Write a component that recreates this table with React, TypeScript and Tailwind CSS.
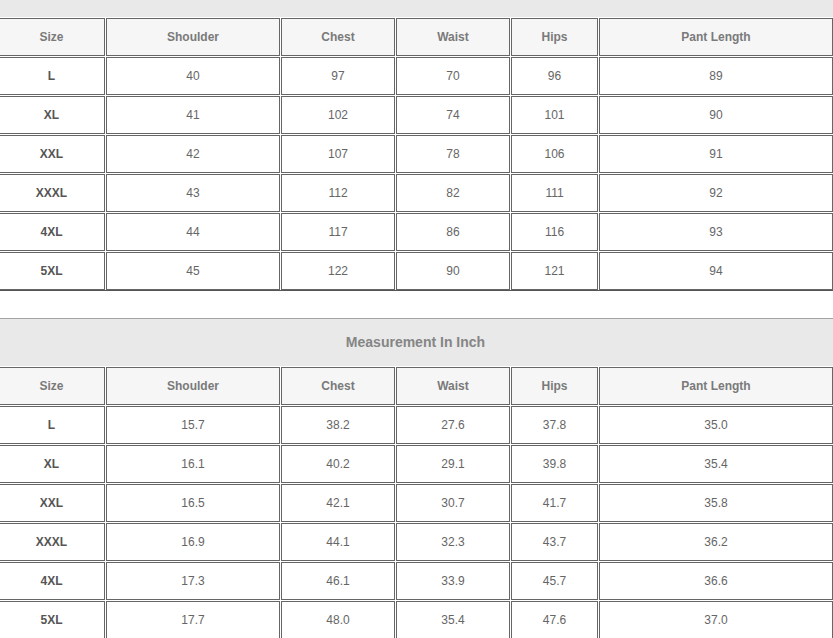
const widths = ['w-[107px]', 'w-[174px]', 'w-[114px]', 'w-[114px]', 'w-[87px]', 'w-[234px]'];

const headers = ['Size', 'Shoulder', 'Chest', 'Waist', 'Hips', 'Pant Length'];

const cmRows = [
  ['L', '40', '97', '70', '96', '89'],
  ['XL', '41', '102', '74', '101', '90'],
  ['XXL', '42', '107', '78', '106', '91'],
  ['XXXL', '43', '112', '82', '111', '92'],
  ['4XL', '44', '117', '86', '116', '93'],
  ['5XL', '45', '122', '90', '121', '94'],
];

const inchRows = [
  ['L', '15.7', '38.2', '27.6', '37.8', '35.0'],
  ['XL', '16.1', '40.2', '29.1', '39.8', '35.4'],
  ['XXL', '16.5', '42.1', '30.7', '41.7', '35.8'],
  ['XXXL', '16.9', '44.1', '32.3', '43.7', '36.2'],
  ['4XL', '17.3', '46.1', '33.9', '45.7', '36.6'],
  ['5XL', '17.7', '48.0', '35.4', '47.6', '37.0'],
];

function SizeTable({ title, rows, className = '' }: { title?: string; rows: string[][]; className?: string }) {
  return (
    <div className={`flex flex-col gap-px border-t border-b border-t-[#a3a3a3] border-b-[#555] ${className}`}>
      {/* Title (first table's title is scrolled out of view) */}
      <div className="h-[47px] w-[835px] bg-[#e9e9e9] flex items-center justify-center text-[14px] font-bold text-[#858585]">
        {title}
      </div>

      {/* Header */}
      <div className="flex gap-px">
        {headers.map((h, i) => (
          <div
            key={h}
            className={`${widths[i]} h-[38px] shrink-0 border border-[#666] bg-[#f6f6f6] flex items-center justify-center text-[12px] font-bold text-[#7a7a7a]`}
          >
            {h}
          </div>
        ))}
      </div>

      {/* Rows */}
      {rows.map((row) => (
        <div key={row[0]} className="flex gap-px">
          {row.map((v, i) => (
            <div
              key={i}
              className={`${widths[i]} h-[38px] shrink-0 border border-[#666] bg-white flex items-center justify-center text-[12px] ${
                i === 0 ? 'font-bold text-[#555]' : 'text-[#666]'
              }`}
            >
              {v}
            </div>
          ))}
        </div>
      ))}
    </div>
  );
}

export default function App() {
  return (
    <div className="w-[833px] h-[638px] overflow-hidden bg-white font-['Liberation_Sans',Arial,sans-serif]">
      <div className="-ml-[2px] -mt-[31px] flex flex-col">
        <SizeTable rows={cmRows} />
        <SizeTable title="Measurement In Inch" rows={inchRows} className="mt-[27px]" />
      </div>
    </div>
  );
}
